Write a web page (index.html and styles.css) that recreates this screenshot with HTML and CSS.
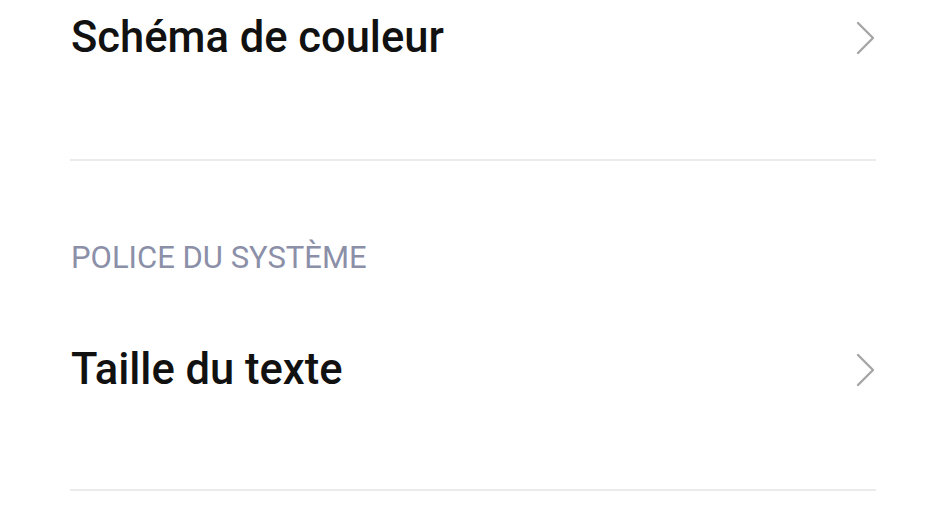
FILE: index.html
```html
<!DOCTYPE html>
<html lang="fr">
<head>
  <meta charset="UTF-8">
  <title>Paramètres</title>
  <link rel="stylesheet" href="styles.css">
</head>
<body>
  <div class="settings-list">
    <div class="settings-item first">
      <div class="settings-name">Schéma de couleur</div>
      <svg class="settings-arrow" viewBox="0 0 20 34" width="20" height="34">
        <path d="M2 2 L17 17 L2 32" fill="none" stroke="#a6a6a6" stroke-width="2.4" stroke-linecap="round" stroke-linejoin="round"/>
      </svg>
    </div>
    <div class="settings-title">POLICE DU SYSTÈME</div>
    <div class="settings-item">
      <div class="settings-name">Taille du texte</div>
      <svg class="settings-arrow" viewBox="0 0 20 34" width="20" height="34">
        <path d="M2 2 L17 17 L2 32" fill="none" stroke="#a6a6a6" stroke-width="2.4" stroke-linecap="round" stroke-linejoin="round"/>
      </svg>
    </div>
  </div>
</body>
</html>
```

FILE: styles.css
```css
html, body {
  margin: 0;
  background: #fff;
  font-family: Roboto, 'Noto Sans', sans-serif;
}
*,
*::before,
*::after {
  box-sizing: border-box;
}
.settings-list {
  padding: 0 69px 0 70px;
  overflow: hidden;
  height: 532px;
}
.settings-item {
  display: flex;
  align-items: center;
  justify-content: space-between;
  padding: 70px 0 95px;
  border-bottom: 2px solid #ebebeb;
}
/* liste défilée : le haut du premier item est caché */
.settings-item.first {
  margin-top: -56px;
  padding-bottom: 97px;
}
.settings-name {
  font-size: 43.5px;
  font-weight: 500;
  line-height: 48px;
  color: #111;
  padding-left: 1px;
}
.settings-arrow {
  display: block;
}
.settings-title {
  padding-top: 79px;
  font-size: 31px;
  line-height: 36px;
  color: #8b8fa8;
  padding-left: 1px;
}
```
